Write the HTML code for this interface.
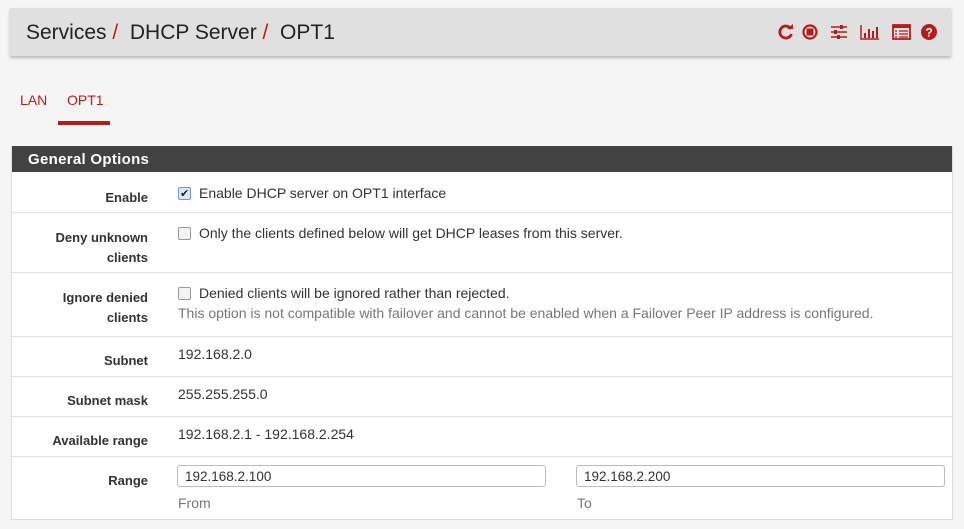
<!DOCTYPE html>
<html><head><meta charset="utf-8"><style>
body{margin:0;background:#f5f5f5;font-family:"Liberation Sans",sans-serif;width:964px;height:529px;overflow:hidden;position:relative;color:#212121}
.hdr{position:absolute;left:10px;top:8px;width:941px;height:48px;background:#e0e0e0;box-shadow:0 2px 3px rgba(0,0,0,.25)}
.hdr .t{position:absolute;left:16px;top:13px;font-size:21px;color:#222}
.hdr .t b{color:#b71c1c;font-weight:normal}
.icons{position:absolute;right:14px;top:16px;display:flex;gap:8px}
.tabs{position:absolute;top:92px;font-size:14px;color:#b71c1c}
.ul{position:absolute;left:58px;top:121px;width:52px;height:4px;background:#b71c1c}
.panel{position:absolute;left:11px;top:146px;width:940px;height:373px;background:#fff;border:1px solid #ddd;border-top:none}
.ph{height:26px;background:#424242;color:#fff;font-weight:bold;font-size:15px;line-height:28px;padding-left:16px;letter-spacing:.3px}
.row{position:relative;border-bottom:1px solid #e0e0e0}
.lab{position:absolute;right:804px;width:130px;text-align:right;font-weight:bold;font-size:13px;line-height:20px;color:#333}
.c{position:absolute;left:166px;font-size:14px;line-height:20px;color:#333}
.cb{display:inline-block;width:11px;height:11px;border:1px solid #999;border-radius:2px;background:#f3f3f3;vertical-align:-2px;margin-right:8px}
.hint{color:#777}
.inp{position:absolute;height:22px;border:1px solid #bbb;border-radius:3px;font-size:13.5px;line-height:22px;padding-left:7px;box-sizing:border-box;color:#333}
</style></head><body>
<div class="hdr"><div class="t">Services <b>/</b>&nbsp; DHCP Server <b>/</b>&nbsp; OPT1</div>
<div class="icons">
<svg width="16" height="16" viewBox="0 0 16 16"><path d="M13 5A6 6 0 1 0 13.5 10" fill="none" stroke="#b71c1c" stroke-width="2.8"/><path d="M9 5h6V0z" fill="#b71c1c"/></svg>
<svg width="16" height="16" viewBox="0 0 16 16"><circle cx="8" cy="8" r="6.5" fill="none" stroke="#b71c1c" stroke-width="2.2"/><rect x="4.5" y="4.5" width="7" height="7" fill="#b71c1c"/></svg>
<svg width="18" height="16" viewBox="0 0 18 16" style="margin-left:4px"><g stroke="#b71c1c" stroke-width="1.5"><path d="M1 3h16M1 8h16M1 13h16"/></g><g fill="#b71c1c"><rect x="10" y="1" width="3" height="4"/><rect x="4" y="6" width="3" height="4"/><rect x="7" y="11" width="3" height="4"/></g></svg>
<svg width="20" height="16" viewBox="0 0 20 16" style="margin-left:4px"><path d="M1 1v14h18" fill="none" stroke="#b71c1c" stroke-width="1.5"/><g fill="#b71c1c"><rect x="4" y="9" width="2" height="5"/><rect x="8" y="5" width="2" height="9"/><rect x="12" y="7" width="2" height="7"/><rect x="16" y="3" width="2" height="11"/></g></svg>
<svg width="19" height="16" viewBox="0 0 19 16" style="margin-left:4px"><rect x="1" y="1" width="17" height="14" fill="none" stroke="#b71c1c" stroke-width="1.8"/><rect x="1" y="1" width="17" height="3" fill="#b71c1c"/><g stroke="#b71c1c" stroke-width="1.3"><path d="M3 7h2M7 7h9M3 10h2M7 10h9M3 13h2M7 13h9"/></g></svg>
<svg width="16" height="16" viewBox="0 0 16 16" style="margin-left:2px"><circle cx="8" cy="8" r="8" fill="#b71c1c"/><text x="8" y="12.5" font-size="12" font-weight="bold" fill="#fff" text-anchor="middle" font-family="Liberation Sans">?</text></svg>
</div></div>
<div class="tabs" style="left:20px">LAN</div><div class="tabs" style="left:67px">OPT1</div>
<div class="ul"></div>
<div class="panel"><div class="ph">General Options</div>
<div class="row" style="height:40px"><div class="lab" style="top:16px">Enable</div><div class="c" style="top:11px"><span class="cb" style="background:#dde8f7;border-color:#6a9ad8;position:relative"><span style="position:absolute;left:1px;top:-4px;font-size:11px;color:#222">✔</span></span>Enable DHCP server on OPT1 interface</div></div>
<div class="row" style="height:59px"><div class="lab" style="top:15px">Deny unknown<br>clients</div><div class="c" style="top:10px"><span class="cb"></span>Only the clients defined below will get DHCP leases from this server.</div></div>
<div class="row" style="height:63px"><div class="lab" style="top:15px">Ignore denied<br>clients</div><div class="c" style="top:10px"><span class="cb"></span>Denied clients will be ignored rather than rejected.<br><span class="hint">This option is not compatible with failover and cannot be enabled when a Failover Peer IP address is configured.</span></div></div>
<div class="row" style="height:39px"><div class="lab" style="top:14px">Subnet</div><div class="c" style="top:7px">192.168.2.0</div></div>
<div class="row" style="height:39px"><div class="lab" style="top:14px">Subnet mask</div><div class="c" style="top:7px">255.255.255.0</div></div>
<div class="row" style="height:39px"><div class="lab" style="top:14px">Available range</div><div class="c" style="top:7px">192.168.2.1 - 192.168.2.254</div></div>
<div class="row" style="height:61px;border:none"><div class="lab" style="top:14px">Range</div>
<div class="inp" style="left:165px;top:8px;width:369px">192.168.2.100</div>
<div class="inp" style="left:564px;top:8px;width:369px">192.168.2.200</div>
<div class="c hint" style="top:36px">From</div><div class="c hint" style="top:36px;left:565px">To</div></div>
</div>
</body></html>
